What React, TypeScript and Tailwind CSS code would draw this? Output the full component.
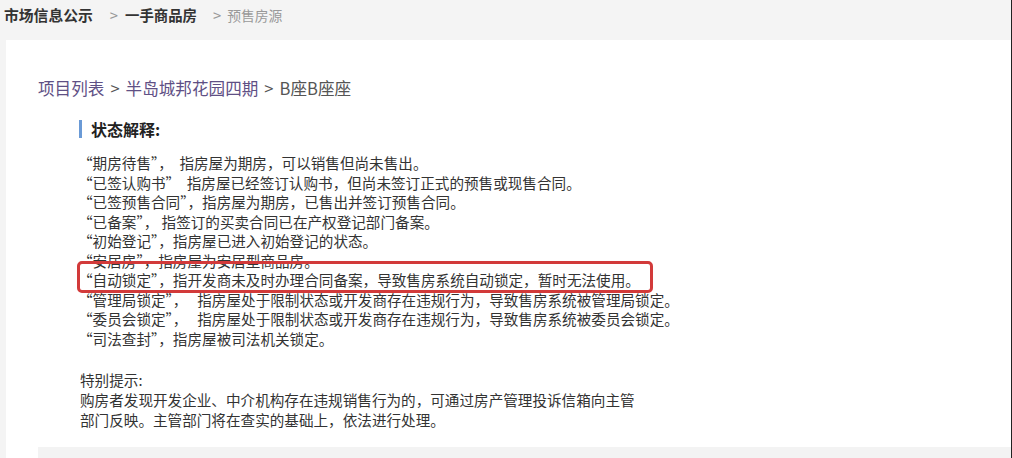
import React from "react";

const statusLines: [string, string][] = [
  ["“期房待售”", "，  指房屋为期房，可以销售但尚未售出。"],
  ["“已签认购书”", "  指房屋已经签订认购书，但尚未签订正式的预售或现售合同。"],
  ["“已签预售合同”", "，指房屋为期房，已售出并签订预售合同。"],
  ["“已备案”", "， 指签订的买卖合同已在产权登记部门备案。"],
  ["“初始登记”", "，指房屋已进入初始登记的状态。"],
  ["“安居房”", "，指房屋为安居型商品房。"],
  ["“自动锁定”", "，指开发商未及时办理合同备案，导致售房系统自动锁定，暂时无法使用。"],
  ["“管理局锁定”", "，   指房屋处于限制状态或开发商存在违规行为，导致售房系统被管理局锁定。"],
  ["“委员会锁定”", "，   指房屋处于限制状态或开发商存在违规行为，导致售房系统被委员会锁定。"],
  ["“司法查封”", "，指房屋被司法机关锁定。"],
];

export default function App() {
  return (
    <div className="w-[1012px] h-[458px] bg-[#f4f4f4] flex overflow-hidden font-['Noto_Sans_CJK_SC',_'Noto_Sans',_sans-serif] text-[#333]">
      <div className="flex-1 flex flex-col min-w-0">
        <div className="h-[40px] flex items-start pt-[5px] pl-[4px] text-[14.8px] leading-[20px]">
          <span className="font-bold text-[#333]">市场信息公示</span>
          <span className="ml-[17px] mr-[7px] text-[#999]">&gt;</span>
          <span className="font-bold text-[#333] text-[14.4px]">一手商品房</span>
          <span className="ml-[16px] mr-[6px] text-[#999]">&gt;</span>
          <span className="text-[#999] text-[13.8px]">预售房源</span>
        </div>
        <div className="relative flex-1 ml-[6px] bg-white flex flex-col">
          <div className="pl-[32px] pt-[36px] text-[16.6px] leading-[24px] text-[#5f5085]">
            <span>项目列表</span>
            <span className="mx-[6px] text-[#555]">&gt;</span>
            <span>半岛城邦花园四期</span>
            <span className="mx-[6px] text-[#555]">&gt;</span>
            <span className="text-[#555]">B座B座座</span>
          </div>
          <div className="mt-[17px] ml-[73px] flex items-center h-[24px]">
            <div className="w-[3px] h-[18px] bg-[#6a9ad6]" />
            <span className="ml-[9px] text-[16px] font-bold text-[#222]">状态解释:</span>
          </div>
          <div className="mt-[12px] ml-[72px] text-[14.6px] leading-[19.5px] text-[#333]">
            {statusLines.map(([q, rest]) => (
              <div key={q} className="whitespace-pre">
                <span className="[font-feature-settings:'fwid']">{q}</span>
                {rest}
              </div>
            ))}
          </div>
          <div className="mt-[22px] ml-[74px] text-[14.6px] leading-[20px] text-[#333]">
            <div>特别提示:</div>
            <div>购房者发现开发企业、中介机构存在违规销售行为的，可通过房产管理投诉信箱向主管</div>
            <div>部门反映。主管部门将在查实的基础上，依法进行处理。</div>
          </div>
          <div className="flex-1" />
          <div className="ml-[32px] h-[11px] bg-[#f3f3f3]" />
          <div className="absolute left-[71px] top-[221px] w-[576px] h-[32px] border-[3px] border-[#d23a3a] rounded-[5px] pointer-events-none" />
        </div>
      </div>
      <div className="w-[1px] bg-[#222]" />
    </div>
  );
}
